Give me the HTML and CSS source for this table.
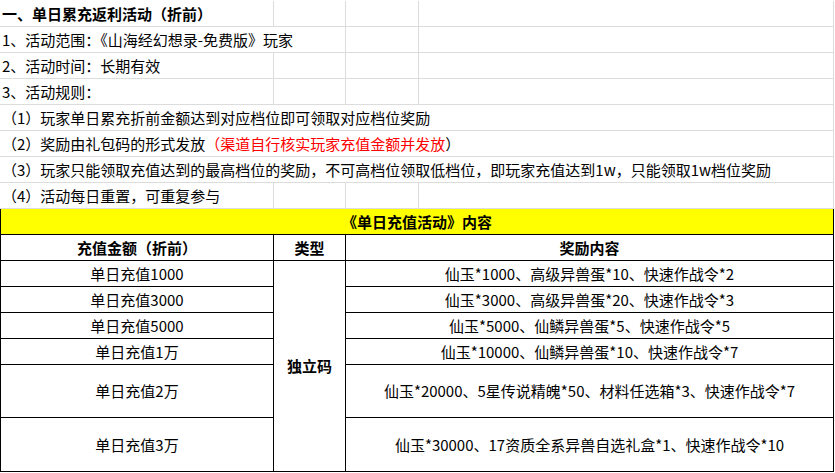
FILE: index.html
```html
<!DOCTYPE html>
<html lang="zh-CN">
<head>
<meta charset="utf-8">
<title>单日累充返利活动</title>
<link rel="stylesheet" href="styles.css">
</head>
<body>
<div class="sheet">
  <div class="rules">
    <div class="cell text bold">一、单日累充返利活动（折前）</div><div class="cell"></div><div class="cell"></div><div class="cell"></div>
    <div class="cell text span2">1、活动范围：《山海经幻想录-免费版》玩家</div><div class="cell"></div><div class="cell"></div>
    <div class="cell text">2、活动时间：长期有效</div><div class="cell"></div><div class="cell"></div><div class="cell"></div>
    <div class="cell text">3、活动规则：</div><div class="cell"></div><div class="cell"></div><div class="cell"></div>
    <div class="cell text span4">（1）玩家单日累充折前金额达到对应档位即可领取对应档位奖励</div>
    <div class="cell text span4">（2）奖励由礼包码的形式发放<span class="red">（渠道自行核实玩家充值金额并发放</span>）</div>
    <div class="cell text span4">（3）玩家只能领取充值达到的最高档位的奖励，不可高档位领取低档位，即玩家充值达到1w，只能领取1w档位奖励</div>
    <div class="cell text">（4）活动每日重置，可重复参与</div><div class="cell"></div><div class="cell"></div><div class="cell"></div>
  </div>
  <table class="rewards">
    <colgroup>
      <col class="c-amount">
      <col class="c-type">
      <col class="c-reward">
    </colgroup>
    <tr class="r-title"><td colspan="3">《单日充值活动》内容</td></tr>
    <tr class="r-head"><td>充值金额（折前）</td><td>类型</td><td>奖励内容</td></tr>
    <tr class="r-one"><td>单日充值1000</td><td rowspan="6" class="type">独立码</td><td>仙玉*1000、高级异兽蛋*10、快速作战令*2</td></tr>
    <tr class="r-one"><td>单日充值3000</td><td>仙玉*3000、高级异兽蛋*20、快速作战令*3</td></tr>
    <tr class="r-one"><td>单日充值5000</td><td>仙玉*5000、仙鳞异兽蛋*5、快速作战令*5</td></tr>
    <tr class="r-one"><td>单日充值1万</td><td>仙玉*10000、仙鳞异兽蛋*10、快速作战令*7</td></tr>
    <tr class="r-two"><td>单日充值2万</td><td>仙玉*20000、5星传说精魄*50、材料任选箱*3、快速作战令*7</td></tr>
    <tr class="r-three"><td>单日充值3万</td><td>仙玉*30000、17资质全系异兽自选礼盒*1、快速作战令*10</td></tr>
  </table>
</div>
</body>
</html>
```
FILE: styles.css
```css
* { box-sizing: border-box; }
html, body {
  margin: 0;
  padding: 0;
  background: #ffffff;
}
body {
  font-family: "Noto Sans CJK SC", "Microsoft YaHei", sans-serif;
  font-size: 15px;
  color: #000000;
}
.sheet {
  width: 835px;
}
.rules {
  display: grid;
  grid-template-columns: 274px 72px 73px 415px;
  grid-auto-rows: 26px;
  padding-top: 1px;
}
.cell {
  border-right: 1px solid #dcdcdc;
  border-bottom: 1px solid #dcdcdc;
}
.text {
  padding-left: 2px;
  line-height: 25px;
  white-space: nowrap;
}
.span2 { grid-column: span 2; }
.span4 { grid-column: span 4; }
.bold { font-weight: bold; }
.red { color: #ff0000; }

.rewards {
  border-collapse: collapse;
  table-layout: fixed;
  width: 833px;
  margin-top: -1px;
}
.c-amount { width: 273px; }
.c-type { width: 72px; }
.c-reward { width: 488px; }
.rewards td {
  border: 1px solid #000000;
  padding: 0;
  text-align: center;
  vertical-align: middle;
  white-space: nowrap;
  line-height: 20px;
}
.r-title td {
  background: #ffff00;
  font-weight: bold;
  height: 26px;
}
.r-head td {
  font-weight: bold;
  height: 26px;
}
.r-one td { height: 26px; }
.r-two td { height: 53px; }
.r-three td { height: 54px; }
.rewards td.type {
  font-weight: bold;
}
```
